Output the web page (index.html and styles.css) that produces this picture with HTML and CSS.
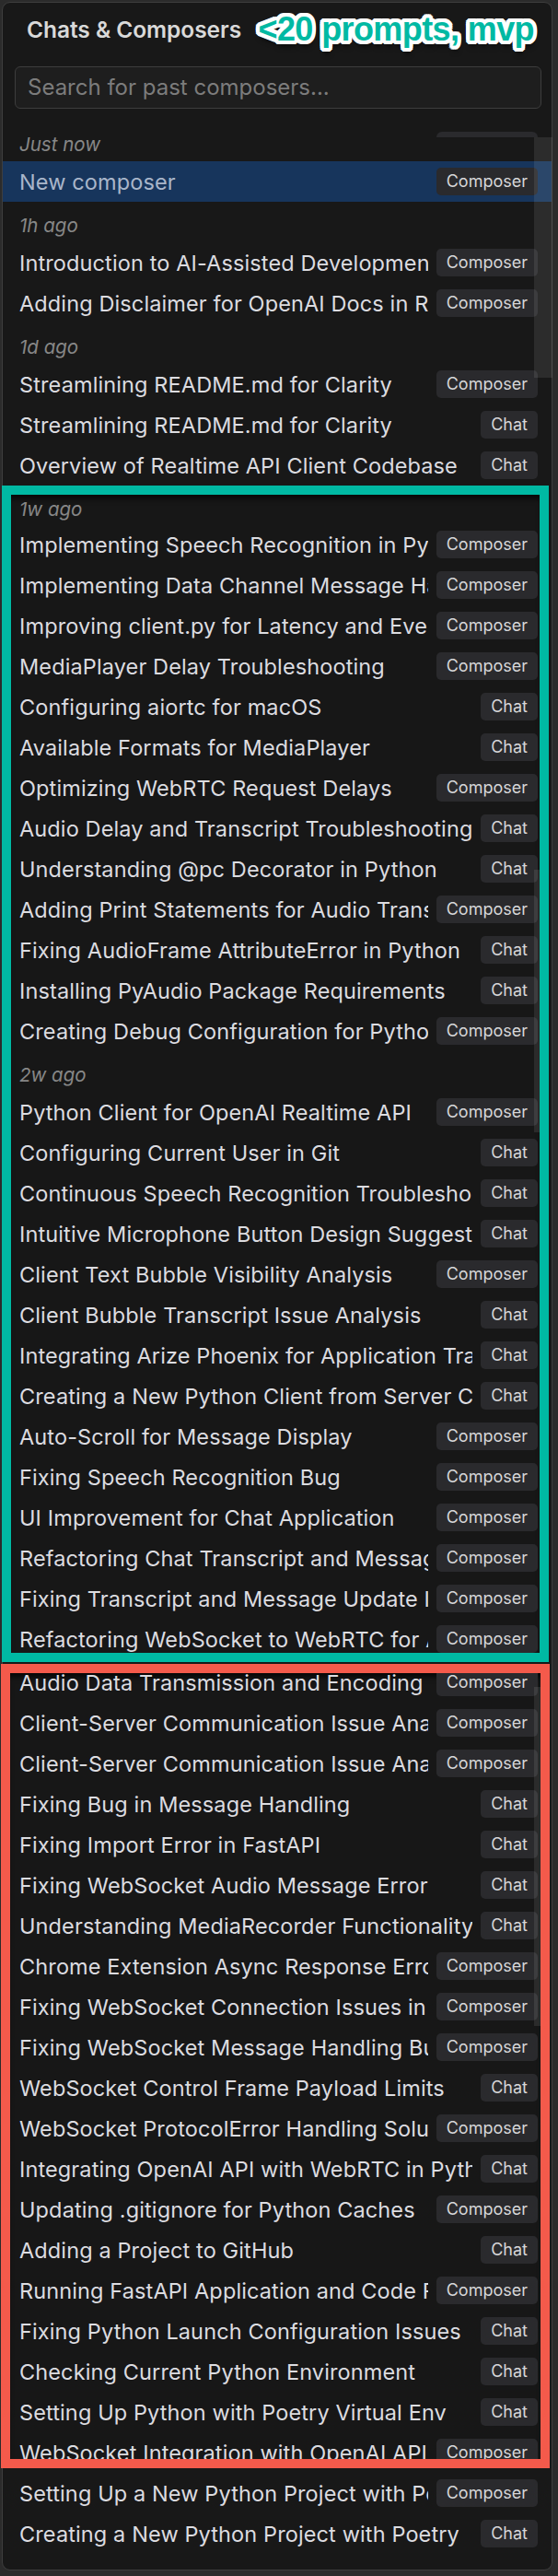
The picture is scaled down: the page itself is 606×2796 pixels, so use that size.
FILE: index.html
```html
<!DOCTYPE html>
<html lang="en">
<head>
<meta charset="utf-8">
<title>Chats &amp; Composers</title>
<link rel="stylesheet" href="styles.css">
</head>
<body>
<div class="panel">
  <div class="header">
    <span class="title">Chats &amp; Composers</span>
    <span class="note">&lt;20 prompts, mvp</span>
  </div>
  <div class="search">Search for past composers...</div>
  <div class="list">
    <div class="ghost"></div>
    <div class="scroll s-main"></div>
    <div class="label">Just now</div>
    <div class="row sel"><span class="name">New composer</span><span class="badge">Composer</span></div>
    <div class="label">1h ago</div>
    <div class="row"><span class="name">Introduction to AI-Assisted Development Workflow</span><span class="badge">Composer</span></div>
    <div class="row"><span class="name">Adding Disclaimer for OpenAI Docs in README</span><span class="badge">Composer</span></div>
    <div class="label">1d ago</div>
    <div class="row"><span class="name">Streamlining README.md for Clarity</span><span class="badge">Composer</span></div>
    <div class="row"><span class="name">Streamlining README.md for Clarity</span><span class="badge">Chat</span></div>
    <div class="row"><span class="name">Overview of Realtime API Client Codebase</span><span class="badge">Chat</span></div>

    <div class="box teal">
      <div class="inner">
        <div class="scroll s-teal"></div>
        <div class="label first">1w ago</div>
        <div class="row"><span class="name">Implementing Speech Recognition in Python</span><span class="badge">Composer</span></div>
        <div class="row"><span class="name">Implementing Data Channel Message Handling</span><span class="badge">Composer</span></div>
        <div class="row"><span class="name">Improving client.py for Latency and Events</span><span class="badge">Composer</span></div>
        <div class="row"><span class="name">MediaPlayer Delay Troubleshooting</span><span class="badge">Composer</span></div>
        <div class="row"><span class="name">Configuring aiortc for macOS</span><span class="badge">Chat</span></div>
        <div class="row"><span class="name">Available Formats for MediaPlayer</span><span class="badge">Chat</span></div>
        <div class="row"><span class="name">Optimizing WebRTC Request Delays</span><span class="badge">Composer</span></div>
        <div class="row"><span class="name">Audio Delay and Transcript Troubleshooting</span><span class="badge">Chat</span></div>
        <div class="row"><span class="name">Understanding @pc Decorator in Python</span><span class="badge">Chat</span></div>
        <div class="row"><span class="name">Adding Print Statements for Audio Transmission</span><span class="badge">Composer</span></div>
        <div class="row"><span class="name">Fixing AudioFrame AttributeError in Python</span><span class="badge">Chat</span></div>
        <div class="row"><span class="name">Installing PyAudio Package Requirements</span><span class="badge">Chat</span></div>
        <div class="row"><span class="name">Creating Debug Configuration for Python</span><span class="badge">Composer</span></div>
        <div class="label">2w ago</div>
        <div class="row"><span class="name">Python Client for OpenAI Realtime API</span><span class="badge">Composer</span></div>
        <div class="row"><span class="name">Configuring Current User in Git</span><span class="badge">Chat</span></div>
        <div class="row"><span class="name">Continuous Speech Recognition Troubleshooting</span><span class="badge">Chat</span></div>
        <div class="row"><span class="name">Intuitive Microphone Button Design Suggestions</span><span class="badge">Chat</span></div>
        <div class="row"><span class="name">Client Text Bubble Visibility Analysis</span><span class="badge">Composer</span></div>
        <div class="row"><span class="name">Client Bubble Transcript Issue Analysis</span><span class="badge">Chat</span></div>
        <div class="row"><span class="name">Integrating Arize Phoenix for Application Tracing</span><span class="badge">Chat</span></div>
        <div class="row"><span class="name">Creating a New Python Client from Server Code</span><span class="badge">Chat</span></div>
        <div class="row"><span class="name">Auto-Scroll for Message Display</span><span class="badge">Composer</span></div>
        <div class="row"><span class="name">Fixing Speech Recognition Bug</span><span class="badge">Composer</span></div>
        <div class="row"><span class="name">UI Improvement for Chat Application</span><span class="badge">Composer</span></div>
        <div class="row"><span class="name">Refactoring Chat Transcript and Message Handling</span><span class="badge">Composer</span></div>
        <div class="row"><span class="name">Fixing Transcript and Message Update Issues</span><span class="badge">Composer</span></div>
        <div class="row"><span class="name">Refactoring WebSocket to WebRTC for Audio</span><span class="badge">Composer</span></div>
      </div>
    </div>

    <div class="box red">
      <div class="inner">
        <div class="scroll s-red"></div>
        <div class="row first"><span class="name">Audio Data Transmission and Encoding</span><span class="badge">Composer</span></div>
        <div class="row"><span class="name">Client-Server Communication Issue Analysis</span><span class="badge">Composer</span></div>
        <div class="row"><span class="name">Client-Server Communication Issue Analysis</span><span class="badge">Composer</span></div>
        <div class="row"><span class="name">Fixing Bug in Message Handling</span><span class="badge">Chat</span></div>
        <div class="row"><span class="name">Fixing Import Error in FastAPI</span><span class="badge">Chat</span></div>
        <div class="row"><span class="name">Fixing WebSocket Audio Message Error</span><span class="badge">Chat</span></div>
        <div class="row"><span class="name">Understanding MediaRecorder Functionality</span><span class="badge">Chat</span></div>
        <div class="row"><span class="name">Chrome Extension Async Response Error</span><span class="badge">Composer</span></div>
        <div class="row"><span class="name">Fixing WebSocket Connection Issues in FastAPI</span><span class="badge">Composer</span></div>
        <div class="row"><span class="name">Fixing WebSocket Message Handling Bug</span><span class="badge">Composer</span></div>
        <div class="row"><span class="name">WebSocket Control Frame Payload Limits</span><span class="badge">Chat</span></div>
        <div class="row"><span class="name">WebSocket ProtocolError Handling Solutions</span><span class="badge">Composer</span></div>
        <div class="row"><span class="name">Integrating OpenAI API with WebRTC in Python</span><span class="badge">Chat</span></div>
        <div class="row"><span class="name">Updating .gitignore for Python Caches</span><span class="badge">Composer</span></div>
        <div class="row"><span class="name">Adding a Project to GitHub</span><span class="badge">Chat</span></div>
        <div class="row"><span class="name">Running FastAPI Application and Code Fixes</span><span class="badge">Composer</span></div>
        <div class="row"><span class="name">Fixing Python Launch Configuration Issues</span><span class="badge">Chat</span></div>
        <div class="row"><span class="name">Checking Current Python Environment</span><span class="badge">Chat</span></div>
        <div class="row"><span class="name">Setting Up Python with Poetry Virtual Env</span><span class="badge">Chat</span></div>
        <div class="row"><span class="name">WebSocket Integration with OpenAI API</span><span class="badge">Composer</span></div>
      </div>
    </div>

    <div class="row after"><span class="name">Setting Up a New Python Project with Poetry</span><span class="badge">Composer</span></div>
    <div class="row"><span class="name">Creating a New Python Project with Poetry</span><span class="badge">Chat</span></div>
  </div>
</div>
</body>
</html>
```

FILE: styles.css
```css
* { box-sizing: border-box; }

html, body {
  margin: 0;
  padding: 0;
  background: #2b2b2b;
}

body {
  font-family: Inter, "Noto Sans", "Liberation Sans", sans-serif;
  padding-top: 2px;
}

.panel {
  margin-left: 2px;
  width: 598px;
  background: #181818;
  border: 1px solid #3e3e3e;
  border-radius: 9px;
  padding-bottom: 17px;
}

.header {
  height: 69px;
  display: flex;
  align-items: flex-start;
  padding: 14px 19px 0 26px;
}

.title {
  font-size: 24.5px;
  line-height: 30px;
  font-weight: 600;
  color: #d9d9d9;
  letter-spacing: -0.05px;
}

.note {
  margin-left: auto;
  margin-top: -3px;
  font-family: "Liberation Sans", Arial, sans-serif;
  font-weight: 700;
  font-size: 36px;
  line-height: 36px;
  letter-spacing: -0.6px;
  color: #00b9a3;
  text-shadow:
    0 -4px 0 #fff, 0 4px 0 #fff, -4px 0 0 #fff, 4px 0 0 #fff,
    -3px -3px 0 #fff, 3px -3px 0 #fff, -3px 3px 0 #fff, 3px 3px 0 #fff,
    -2px -4px 0 #fff, 2px -4px 0 #fff, -2px 4px 0 #fff, 2px 4px 0 #fff,
    -4px -2px 0 #fff, 4px -2px 0 #fff, -4px 2px 0 #fff, 4px 2px 0 #fff,
    1px 7px 5px rgba(0, 0, 0, 0.55);
}

.search {
  margin: 0 11px 0 13px;
  height: 46px;
  border: 1px solid #3d3d3d;
  border-radius: 6px;
  background: #1e1e1e;
  color: #7c7c7c;
  font-size: 24px;
  line-height: 44px;
  padding-left: 13px;
}

.list {
  position: relative;
  margin-top: 13px;
}

.ghost {
  position: absolute;
  left: 471px;
  top: 12px;
  width: 110px;
  height: 6px;
  border-radius: 6px 6px 0 0;
  background: #2a2a2d;
}

.scroll {
  position: absolute;
  background: rgba(255, 255, 255, 0.09);
  z-index: 2;
  pointer-events: none;
}

.s-main { left: 577px; top: 18px; width: 20px; height: 261px; }
.s-teal { left: 568px; top: 407px; width: 6px; height: 285px; }
.s-red  { left: 569px; top: 15px; width: 7px; height: 368px; }

.label {
  height: 44px;
  padding: 8px 0 0 18px;
  font-size: 20.5px;
  line-height: 36px;
  font-style: italic;
  color: #878787;
}

.row {
  height: 44px;
  display: flex;
  align-items: center;
  gap: 9px;
  padding: 0 15px 0 18px;
}

.name {
  flex: 1;
  min-width: 0;
  overflow: hidden;
  white-space: nowrap;
  font-size: 23.5px;
  letter-spacing: 0.12px;
  color: #dcdce0;
}

.badge {
  flex: none;
  height: 30px;
  line-height: 30px;
  padding: 0 11px;
  border-radius: 5px;
  background: #2a2a2d;
  color: #d6d6d8;
  font-size: 18px;
}

.row.sel {
  background: #17355c;
}

.row.sel .name {
  color: #a9b6ca;
}

.box {
  border-style: solid;
  border-width: 10px;
}

.box .inner {
  position: relative;
  overflow: hidden;
  background: #171717;
  box-shadow: inset 0 7px 6px -3px rgba(0, 0, 0, 0.75);
}

.teal {
  border-color: #00b9a3;
  margin: 0 3px 0 -1px;
}

.teal .inner { height: 1257px; }

.teal .row { padding: 0 2px 0 9px; }
.teal .label { padding-left: 9px; }
.teal .label.first {
  height: 34px;
  padding-top: 0;
  margin-top: -2px;
}

.red {
  border-color: #f45a4b;
  margin: 2px 2px 0 -2px;
}

.red .inner { height: 853px; }

.red .row { padding: 0 3px 0 10px; }
.red .row.first { margin-top: -12px; }

.row.after { margin-top: 5px; }
```
